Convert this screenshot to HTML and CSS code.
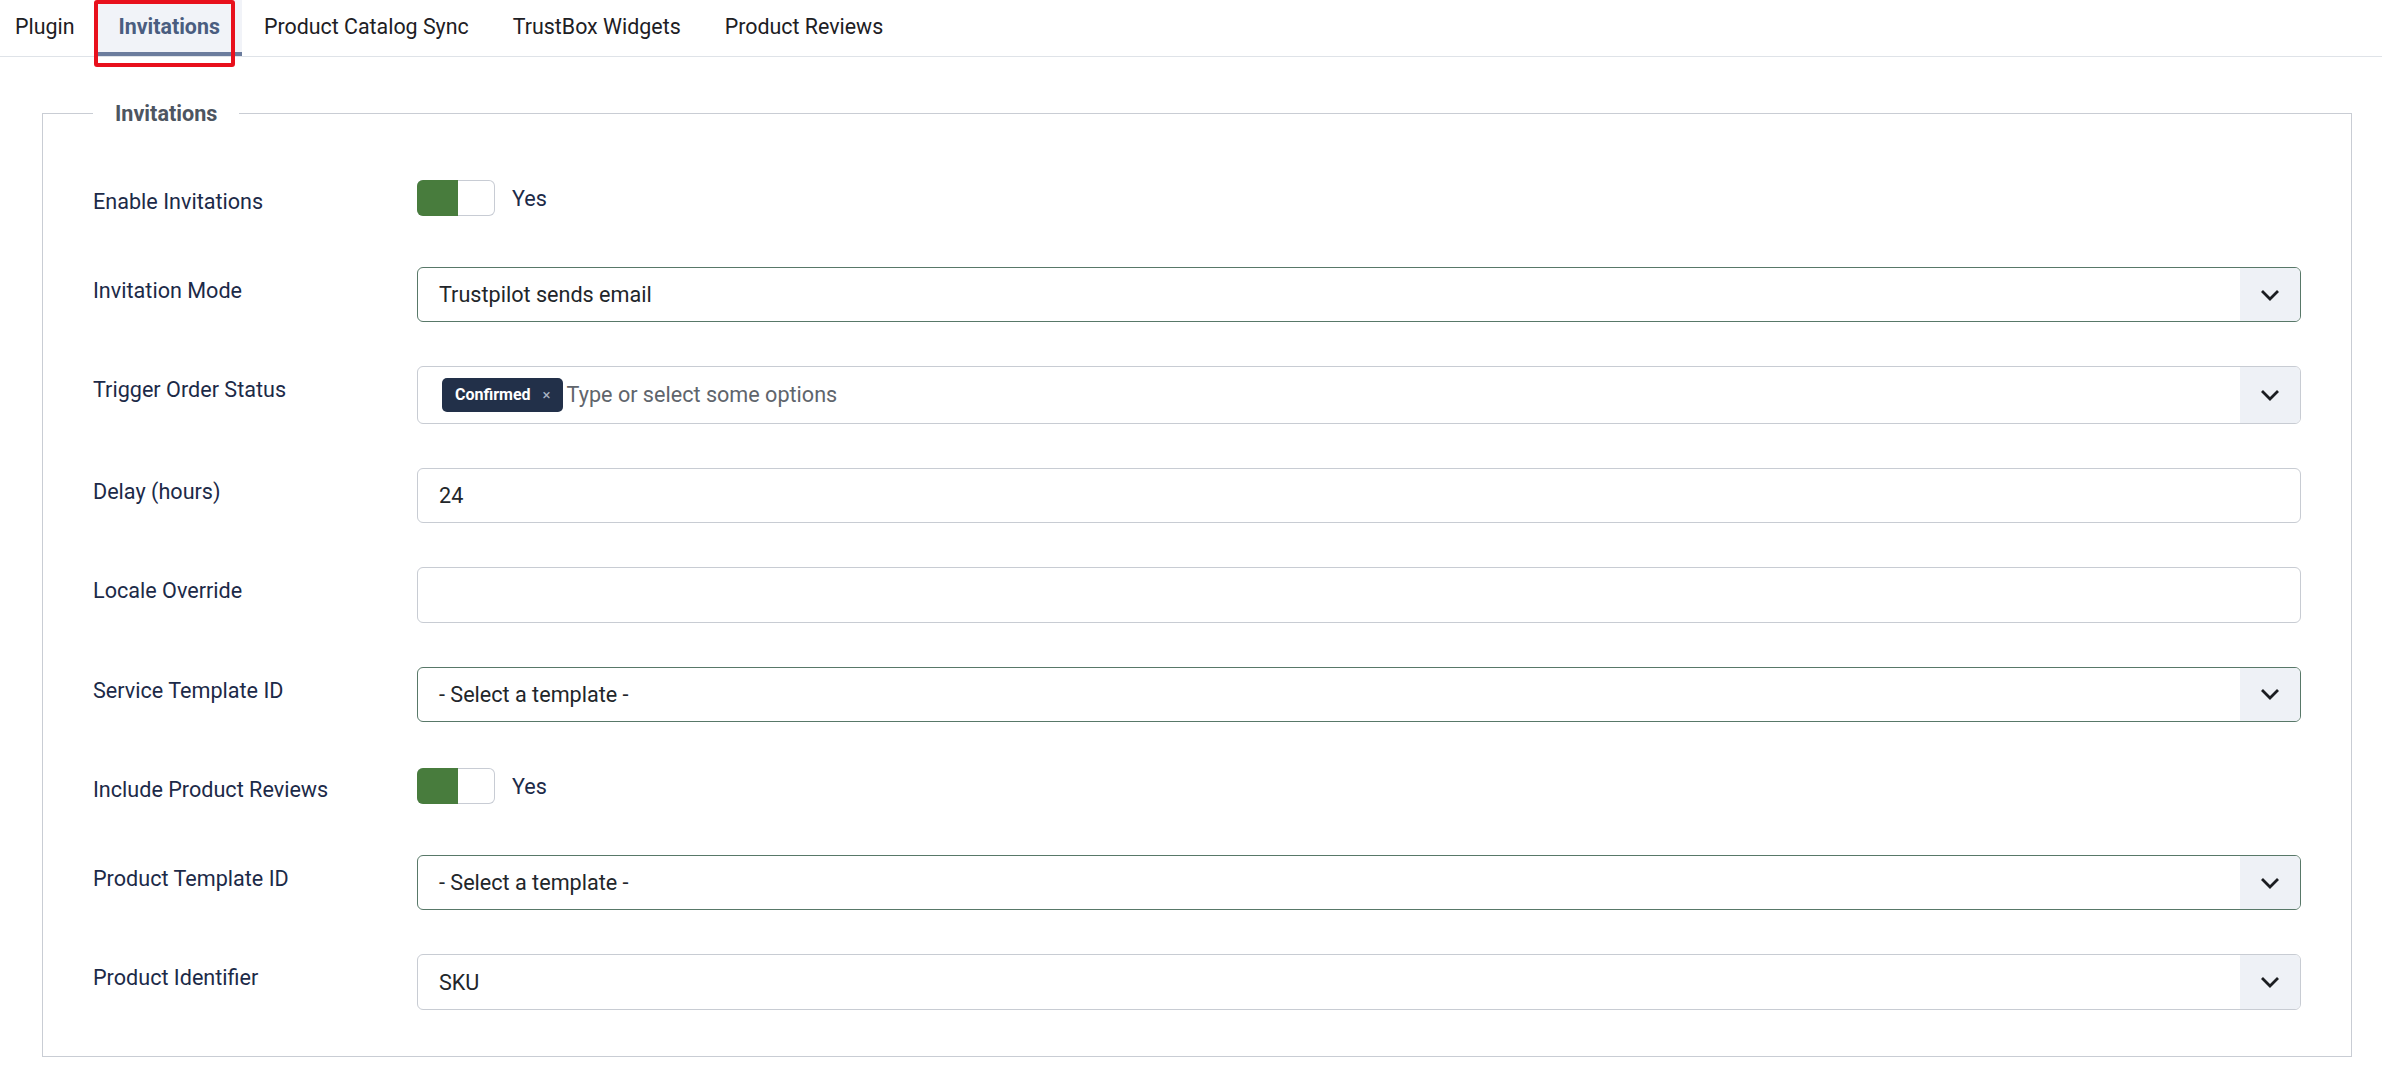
FILE: index.html
```html
<!DOCTYPE html>
<html lang="en">
<head>
    <meta charset="UTF-8">
    <meta name="viewport" content="width=device-width, initial-scale=1.0">
    <title>Trustpilot - Invitations</title>
    <link rel="stylesheet" href="styles.css">
</head>
<body>
    <div class="tabs">
        <nav class="tab-list">
            <a class="tab">Plugin</a>
            <a class="tab active">Invitations<span class="mark"></span></a>
            <a class="tab">Product Catalog Sync</a>
            <a class="tab">TrustBox Widgets</a>
            <a class="tab">Product Reviews</a>
        </nav>
    </div>

    <div class="tab-pane">
        <fieldset class="options">
            <legend>Invitations</legend>

            <div class="control-group">
                <div class="control-label">Enable Invitations</div>
                <div class="controls">
                    <div class="switcher">
                        <span class="switch"><span class="switch-on"></span></span>
                        <span class="switch-text">Yes</span>
                    </div>
                </div>
            </div>

            <div class="control-group">
                <div class="control-label">Invitation Mode</div>
                <div class="controls">
                    <div class="form-select valid">
                        <span class="value">Trustpilot sends email</span>
                        <span class="arrow"><svg width="20" height="12" viewBox="0 0 20 12"><path d="M2 2 L10 10 L18 2" fill="none" stroke="#1b1d21" stroke-width="2.8"/></svg></span>
                    </div>
                </div>
            </div>

            <div class="control-group">
                <div class="control-label">Trigger Order Status</div>
                <div class="controls">
                    <div class="form-select multi">
                        <div class="choices">
                            <span class="tag">Confirmed<span class="tag-remove">&times;</span></span>
                            <span class="placeholder">Type or select some options</span>
                        </div>
                        <span class="arrow"><svg width="20" height="12" viewBox="0 0 20 12"><path d="M2 2 L10 10 L18 2" fill="none" stroke="#1b1d21" stroke-width="2.8"/></svg></span>
                    </div>
                </div>
            </div>

            <div class="control-group">
                <div class="control-label">Delay (hours)</div>
                <div class="controls">
                    <div class="form-control">24</div>
                </div>
            </div>

            <div class="control-group">
                <div class="control-label">Locale Override</div>
                <div class="controls">
                    <div class="form-control"></div>
                </div>
            </div>

            <div class="control-group">
                <div class="control-label">Service Template ID</div>
                <div class="controls">
                    <div class="form-select valid">
                        <span class="value">- Select a template -</span>
                        <span class="arrow"><svg width="20" height="12" viewBox="0 0 20 12"><path d="M2 2 L10 10 L18 2" fill="none" stroke="#1b1d21" stroke-width="2.8"/></svg></span>
                    </div>
                </div>
            </div>

            <div class="control-group">
                <div class="control-label">Include Product Reviews</div>
                <div class="controls">
                    <div class="switcher">
                        <span class="switch"><span class="switch-on"></span></span>
                        <span class="switch-text">Yes</span>
                    </div>
                </div>
            </div>

            <div class="control-group">
                <div class="control-label">Product Template ID</div>
                <div class="controls">
                    <div class="form-select valid">
                        <span class="value">- Select a template -</span>
                        <span class="arrow"><svg width="20" height="12" viewBox="0 0 20 12"><path d="M2 2 L10 10 L18 2" fill="none" stroke="#1b1d21" stroke-width="2.8"/></svg></span>
                    </div>
                </div>
            </div>

            <div class="control-group">
                <div class="control-label">Product Identifier</div>
                <div class="controls">
                    <div class="form-select">
                        <span class="value">SKU</span>
                        <span class="arrow"><svg width="20" height="12" viewBox="0 0 20 12"><path d="M2 2 L10 10 L18 2" fill="none" stroke="#1b1d21" stroke-width="2.8"/></svg></span>
                    </div>
                </div>
            </div>
        </fieldset>
    </div>
</body>
</html>
```

FILE: styles.css
```css
html, body {
    margin: 0;
    padding: 0;
    background: #fff;
}
body {
    font-family: Roboto, "Liberation Sans", sans-serif;
    font-size: 21.6px;
    line-height: 33px;
    color: #22262a;
    overflow: hidden;
}

/* tabs */
.tabs {
    border-bottom: 1px solid #dfe3e8;
}
.tab-list {
    display: flex;
}
.tab {
    position: relative;
    padding: 10px 22px 9px;
    border-bottom: 4px solid transparent;
    color: #1d2024;
    font-size: 21.4px;
    white-space: nowrap;
}
.tab:first-child {
    padding-left: 15px;
}
.tab.active {
    background: #f1f3f8;
    border-bottom-color: #6b7c9d;
    color: #4a5d80;
    font-weight: 700;
}
.tab .mark {
    position: absolute;
    left: -3px;
    top: 0;
    width: 141px;
    height: 67px;
    box-sizing: border-box;
    border: 4px solid #e8101c;
    border-radius: 3px;
}

/* fieldset */
.tab-pane {
    padding: 40px 30px 0 42px;
}
.options {
    margin: 0;
    padding: 48px 50px 2px 50px;
    border: 1px solid #c9cdd4;
    min-width: 0;
}
.options legend {
    padding: 0 22px;
    font-weight: 700;
    color: #4d5561;
}

.control-group {
    display: flex;
    align-items: flex-start;
    margin-bottom: 44px;
}
.control-label {
    width: 324px;
    flex-shrink: 0;
    padding-top: 7px;
    color: #1c2a48;
}
.controls {
    flex: 1;
    min-width: 0;
}

/* switcher */
.switcher {
    display: flex;
    align-items: center;
    padding: 2px 0 7px;
}
.switch {
    display: flex;
    width: 78px;
    height: 36px;
    box-sizing: border-box;
    border-radius: 6px;
    box-shadow: inset 0 0 0 1px #c8ccd4;
    overflow: hidden;
}
.switch-on {
    width: 41px;
    background: #487c3d;
}
.switch-text {
    margin-left: 17px;
    color: #1c2a48;
}

/* inputs and selects */
.form-control,
.form-select {
    border: 1px solid #c8ccd3;
    border-radius: 6px;
    background: #fff;
}
.form-control {
    height: 33px;
    padding: 10.2px 21px;
}
.form-select {
    display: flex;
    overflow: hidden;
}
.form-select.valid {
    border-color: #587868;
}
.form-select .value {
    flex: 1;
    padding: 10.2px 21px;
}
.arrow {
    width: 60px;
    flex-shrink: 0;
    display: flex;
    align-items: center;
    justify-content: center;
    background: #eef1f6;
}

/* multi select */
.choices {
    flex: 1;
    display: flex;
    align-items: center;
    padding: 10.8px 24px;
}
.tag {
    display: inline-flex;
    align-items: center;
    height: 34px;
    padding: 0 12px 0 13px;
    background: #223049;
    border-radius: 5px;
    color: #fff;
    font-size: 16px;
    font-weight: 700;
    line-height: 1;
}
.tag-remove {
    margin-left: 12px;
    font-size: 15px;
    font-weight: 400;
    color: #a9b3c3;
}
.placeholder {
    margin-left: 4px;
    color: #60656c;
    line-height: 34px;
}
```
